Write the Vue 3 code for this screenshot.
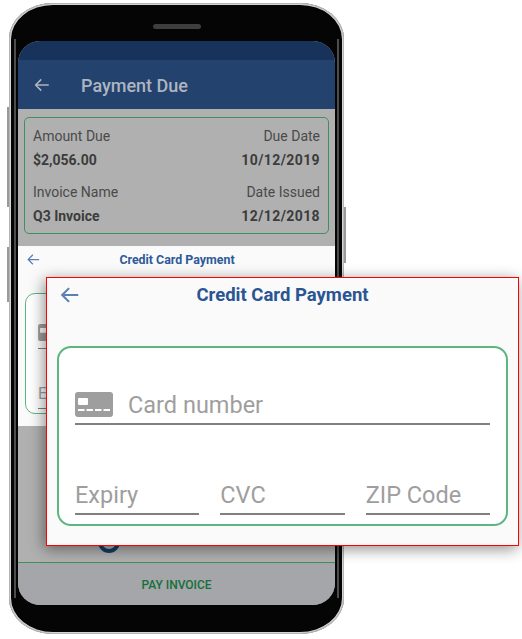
<script setup>
const summary = [
  { label: 'Amount Due', value: '$2,056.00', sideLabel: 'Due Date', sideValue: '10/12/2019' },
  { label: 'Invoice Name', value: 'Q3 Invoice', sideLabel: 'Date Issued', sideValue: '12/12/2018' },
]
const arrow = 'M21 12H4M11 4.5L3.5 12l7.5 7.5'
</script>

<template>
  <div class="page">
    <div class="phone">
      <span class="side-btn left-one" />
      <span class="side-btn left-two" />
      <span class="side-btn right-one" />
      <div class="speaker" />
      <div class="screen">
        <div class="status" />
        <header class="appbar">
          <svg class="appbar-arrow" viewBox="0 0 24 24"><path :d="arrow" /></svg>
          <span>Payment Due</span>
        </header>
        <section class="summary">
          <div class="summary-card">
            <div v-for="row in summary" :key="row.label" class="summary-row">
              <div class="summary-col">
                <span>{{ row.label }}</span>
                <b>{{ row.value }}</b>
              </div>
              <div class="summary-col end">
                <span>{{ row.sideLabel }}</span>
                <b>{{ row.sideValue }}</b>
              </div>
            </div>
          </div>
        </section>
        <section class="sheet">
          <div class="sheet-head">
            <svg class="sheet-arrow" viewBox="0 0 24 24"><path :d="arrow" /></svg>
            <span>Credit Card Payment</span>
          </div>
          <div class="sheet-card">
            <div class="sheet-line">
              <svg class="sheet-icon" viewBox="0 0 38 25">
                <path d="M3 0h32a3 3 0 0 1 3 3v19a3 3 0 0 1-3 3H3a3 3 0 0 1-3-3V3a3 3 0 0 1 3-3z" />
                <rect x="3" y="6" width="10" height="7" rx="1" fill="#fff" />
              </svg>
            </div>
            <div class="sheet-line bottom">Expiry</div>
          </div>
        </section>
        <section class="methods">
          <div class="method">
            <span class="radio" />
            <span class="method-name">Monthly Plan</span>
          </div>
        </section>
        <footer class="pay">PAY INVOICE</footer>
      </div>
    </div>

    <div class="popup">
      <div class="popup-head">
        <svg class="popup-arrow" viewBox="0 0 24 24"><path :d="arrow" /></svg>
        <span>Credit Card Payment</span>
      </div>
      <div class="form-card">
        <div class="field card-field">
          <svg class="card-icon" viewBox="0 0 38 25">
            <path fill="#9e9e9e" d="M3 0h32a3 3 0 0 1 3 3v19a3 3 0 0 1-3 3H3a3 3 0 0 1-3-3V3a3 3 0 0 1 3-3z" />
            <rect x="3" y="6" width="10" height="7" rx="1" fill="#fff" />
            <path stroke="#fff" stroke-width="2" stroke-dasharray="6.5 2" d="M3 18h32" />
          </svg>
          <span>Card number</span>
        </div>
        <div class="field-row">
          <div class="field">Expiry</div>
          <div class="field">CVC</div>
          <div class="field">ZIP Code</div>
        </div>
      </div>
    </div>
  </div>
</template>

<style scoped>
.page {
  position: relative;
  width: 522px;
  height: 639px;
  overflow: hidden;
  background: #fff;
  font-family: Roboto, "Liberation Sans", sans-serif;
}

.phone {
  position: relative;
  box-sizing: border-box;
  width: 335px;
  height: 631px;
  margin: 3px 0 0 9px;
  padding: 38px 9px 29px;
  border-radius: 44px / 36px;
  background: #050505;
  box-shadow: inset 0 0 0 1px #b5b5b5, inset 0 0 0 2px #d4d4d4;
}

/* thin metal line running down both long edges */
.phone::before {
  content: "";
  position: absolute;
  left: 5px;
  right: 5px;
  top: 36px;
  bottom: 36px;
  border-left: 2px solid #4d4d4d;
  border-right: 2px solid #4d4d4d;
}

.side-btn {
  position: absolute;
  width: 2px;
  background: #9a9a9a;
}

.left-one {
  left: -2px;
  top: 104px;
  height: 100px;
}

.left-two {
  left: -2px;
  top: 244px;
  height: 55px;
}

.right-one {
  right: -2px;
  top: 204px;
  height: 56px;
}

.speaker {
  position: absolute;
  left: 144px;
  top: 21px;
  width: 48px;
  height: 5px;
  border-radius: 3px;
  background: #3e3e3e;
}

.screen {
  position: relative;
  display: flex;
  flex-direction: column;
  height: 564px;
  overflow: hidden;
  border-radius: 22px;
  background: #b0b0b0;
}

.status {
  height: 19px;
  flex: none;
  background: #17335c;
}

.appbar {
  display: flex;
  align-items: center;
  height: 49px;
  flex: none;
  padding-left: 15px;
  background: #24426e;
  color: #adb5c1;
  font-size: 18px;
  font-weight: 500;
}

.appbar span {
  padding-top: 2px;
}

.appbar-arrow {
  width: 18px;
  height: 18px;
  margin-right: 30px;
}

.appbar-arrow path,
.sheet-arrow path,
.popup-arrow path {
  fill: none;
  stroke: currentColor;
  stroke-width: 2;
}

.popup-arrow path {
  stroke-width: 2.3;
}

.summary {
  height: 137px;
  flex: none;
  box-sizing: border-box;
  padding: 8px 6px 0;
}

.summary-card {
  box-sizing: border-box;
  height: 117px;
  padding: 10px 8px 0;
  border: 1px solid #3f8f5f;
  border-radius: 5px;
}

.summary-row {
  display: flex;
  justify-content: space-between;
  height: 56px;
  font-size: 14px;
  color: #4a4a4a;
}

.summary-col {
  display: flex;
  flex-direction: column;
  gap: 7px;
  line-height: 17px;
}

.summary-col.end {
  align-items: flex-end;
}

.summary-col b {
  color: #3c3c3c;
}

.summary-col.end b {
  letter-spacing: 0.4px;
}

.sheet {
  height: 180px;
  flex: none;
  box-sizing: border-box;
  padding: 0 6px 0 7px;
  background: #fafafa;
}

.sheet-head {
  position: relative;
  height: 47px;
  padding-top: 4px;
  box-sizing: border-box;
  text-align: center;
  line-height: 19px;
  font-size: 12.4px;
  font-weight: 700;
  color: #2f5a99;
}

.sheet-arrow {
  position: absolute;
  left: 1px;
  top: 6px;
  width: 15px;
  height: 15px;
  color: #5b80b4;
}

.sheet-card {
  box-sizing: border-box;
  height: 121px;
  padding: 0 12px;
  border: 1px solid #5cb67f;
  border-radius: 10px;
  background: #fff;
}

.sheet-line {
  height: 24px;
  margin-top: 30px;
  border-bottom: 1px solid #808080;
}

.sheet-line.bottom {
  height: 26px;
  margin-top: 33px;
  font-size: 16px;
  line-height: 24px;
  color: #9e9e9e;
}

.sheet-icon {
  display: block;
  width: 26px;
  height: 17px;
  fill: #9e9e9e;
}

.methods {
  flex: 1;
  padding: 104px 0 0 80px;
  box-sizing: border-box;
}

.method {
  display: flex;
  align-items: center;
  gap: 26px;
  font-size: 14px;
  color: #1d3656;
}

.method-name {
  padding-bottom: 7px;
}

.radio {
  box-sizing: border-box;
  width: 22px;
  height: 22px;
  border: 4px solid #163d66;
  border-radius: 50%;
}

.pay {
  display: flex;
  align-items: center;
  justify-content: center;
  box-sizing: border-box;
  height: 43px;
  flex: none;
  padding-top: 2px;
  border-top: 1px solid #3f8f5f;
  background: #a4a6a9;
  color: #15703a;
  font-size: 12px;
  font-weight: 500;
}

.popup {
  position: absolute;
  left: 46px;
  top: 277px;
  box-sizing: border-box;
  width: 473px;
  height: 269px;
  padding: 0 10px;
  border: 1px solid #f00;
  background: #fafafa;
  box-shadow: -2px 3px 14px rgba(0, 0, 0, 0.45);
}

.popup-head {
  position: relative;
  height: 68px;
  padding-top: 6px;
  box-sizing: border-box;
  text-align: center;
  line-height: 22px;
  font-size: 18.5px;
  font-weight: 700;
  color: #2a5592;
}

.popup-arrow {
  position: absolute;
  left: 2px;
  top: 6px;
  width: 22px;
  height: 22px;
  color: #5b80b4;
}

.form-card {
  box-sizing: border-box;
  height: 180px;
  padding: 0 16px;
  border: 2px solid #5cb67f;
  border-radius: 14px;
  background: #fff;
}

.field {
  box-sizing: border-box;
  border-bottom: 2px solid #808080;
  font-size: 23.5px;
  line-height: 30px;
  color: #9e9e9e;
}

.card-field {
  display: flex;
  align-items: center;
  gap: 15px;
  height: 35px;
  margin-top: 42px;
  padding-bottom: 4px;
}

.card-icon {
  width: 38px;
  height: 25px;
  flex: none;
}

.field-row {
  display: flex;
  gap: 21px;
  margin-top: 53px;
}

.field-row .field {
  flex: 1;
  height: 37px;
  padding-top: 2px;
}
</style>

<style>
html,
body {
  margin: 0;
  background: #fff;
}
</style>
